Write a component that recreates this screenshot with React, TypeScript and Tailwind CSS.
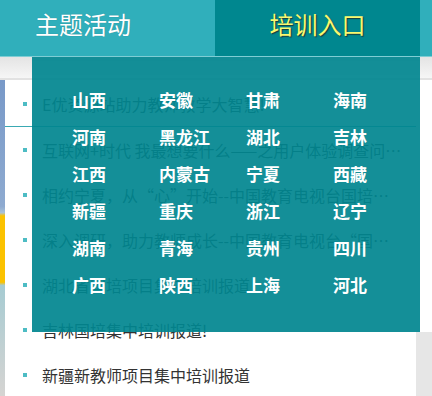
const provinces = [
  '山西', '安徽', '甘肃', '海南',
  '河南', '黑龙江', '湖北', '吉林',
  '江西', '内蒙古', '宁夏', '西藏',
  '新疆', '重庆', '浙江', '辽宁',
  '湖南', '青海', '贵州', '四川',
  '广西', '陕西', '上海', '河北',
];

const news = [
  'E优资源站助力教师教学大智慧!',
  '互联网+时代 我最想要什么——之用户体验调查问卷结果分析',
  '相约宁夏，从“心”开始--中国教育电视台国培项目走进宁夏',
  '深入调研，助力教师成长--中国教育电视台“国培计划”调研',
  '湖北省国培项目集中培训报道',
  '吉林国培集中培训报道!',
  '新疆新教师项目集中培训报道',
];

export default function App() {
  return (
    <div className="relative w-[432px] h-[396px] overflow-hidden bg-white font-['Noto_Sans_CJK_SC',sans-serif]">
      <div className="flex h-[57px] bg-[#30afbb] border-b border-[#7fcdd4]">
        <div className="w-[215px] pl-[35px] pt-[6px] text-[24px] text-white [text-shadow:0_0_1px_rgba(0,0,0,0.25)]">
          主题活动
        </div>
        <div className="w-[205px] pt-[6px] text-center text-[24px] bg-[#00878f] text-[#f8f870] [text-shadow:1px_1px_1px_#1a3a3a]">
          培训入口
        </div>
        <div className="flex-1" />
      </div>

      <div className="h-[21px] bg-gradient-to-b from-[#e4e4e4] to-[#f6f6f6]" />
      <div className="h-[2px] bg-[#e2e2e2]" />

      <div className="flex h-[316px]">
        <div className="w-[5px] bg-[linear-gradient(to_bottom,#7899c8_0%,#8eaad0_40%,#a9c2d8_42%,#fbc200_43%,#fbc200_64%,#a6cbd2_65%,#d6d4d2_100%)]" />
        <ul className="flex-1 pt-[1px]">
          {news.map((t, i) => (
            <li
              key={t}
              className={`flex items-center h-[45px] ${i === 0 ? 'h-[46px] border-b border-[#3aa9b3]' : ''}`}
            >
              <span className="ml-[18px] w-[4px] h-[4px] bg-[#4dbcc4] shrink-0" />
              <span className="ml-[15px] w-[362px] truncate text-[16px] text-[#333]">{t}</span>
            </li>
          ))}
        </ul>
        <div className="w-[16px] flex flex-col">
          <div className="h-[252px] bg-white" />
          <div className="flex-1 bg-[#e6e6e6]" />
        </div>
      </div>

      <div className="absolute left-[32px] top-[57px] w-[388px] h-[275px] bg-[rgba(0,133,143,0.92)] pl-[40px] pt-[26px]">
        <div className="grid grid-cols-[repeat(4,87px)] auto-rows-[37px]">
          {provinces.map((p) => (
            <div
              key={p}
              className="flex items-center text-[17px] font-bold text-white font-['Liberation_Serif','Noto_Sans_CJK_SC',serif]"
            >
              {p}
            </div>
          ))}
        </div>
      </div>
    </div>
  );
}
